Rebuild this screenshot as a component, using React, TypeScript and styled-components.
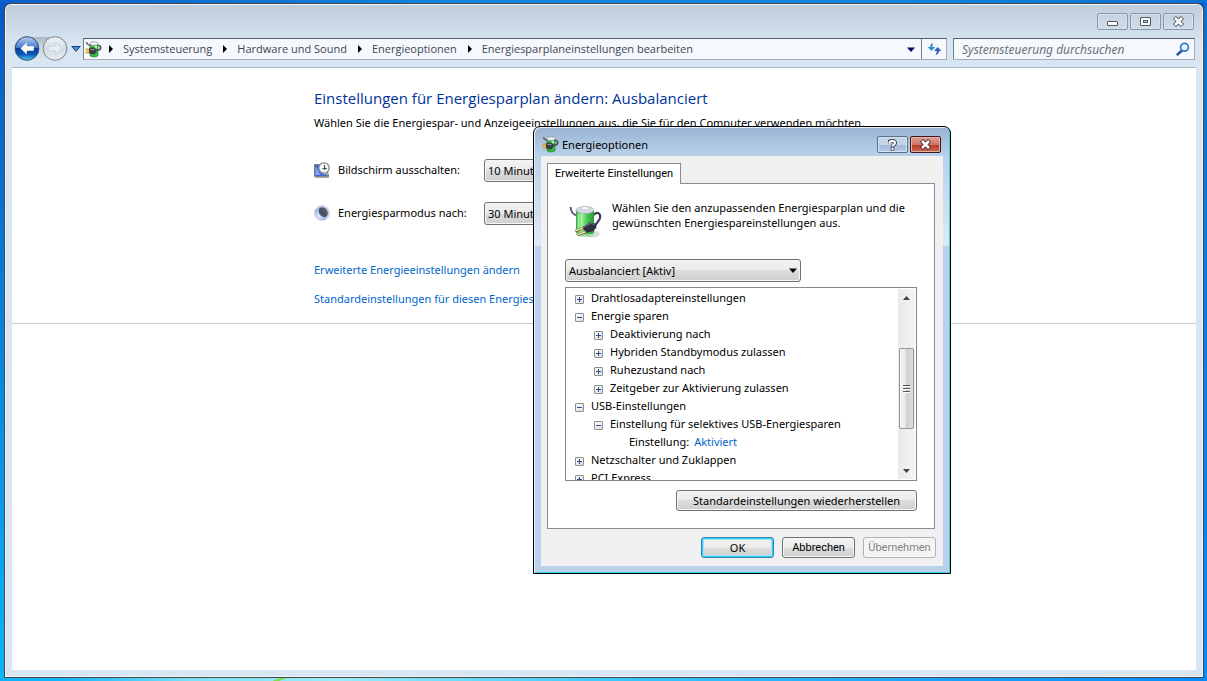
import React from 'react';
import styled, { createGlobalStyle, css } from 'styled-components';

const ui = '"Noto Sans", "Open Sans", sans-serif';
const classic = 'Roboto, Arial, sans-serif';

const GlobalStyle = createGlobalStyle`
  *, *::before, *::after { box-sizing: border-box; }
  body { margin: 0; font: 11px/15px ${ui}; color: #000; }
  button, select, input { font: inherit; color: inherit; margin: 0; }
  svg { display: block; flex: none; }
  ul, ol, h1, h2, p { margin: 0; padding: 0; font-size: inherit; font-weight: normal; list-style: none; }
`;

/* ---------- desktop and main window ---------- */

const Desktop = styled.div`
  position: relative;
  display: flex;
  min-height: 100vh;
  padding: 3px 3px 3px 4px;
  background:
    linear-gradient(160deg, transparent 32%, #86dc50 36%, #86dc50 60%, transparent 66%) 272px 100% / 16px 3px no-repeat,
    linear-gradient(90deg, #0fb2fa 0, #12b6fa 5%, #7ce2f8 16%, #9aecfa 28%, #6edcfa 38%, #38c6fc 52%, #1ea6fc 75%, #068cfa 100%) 0 100% / 100% 3px no-repeat,
    linear-gradient(90deg, #0a5fcb 0, #1287df 40%, #1284dc 75%, #0a70d6 100%) 0 0 / 100% 3px no-repeat,
    linear-gradient(#0a70d6, #0a8cf6) 100% 0 / 3px 100% no-repeat,
    linear-gradient(#0759c8, #0784de 50%, #0cb4f9);
`;

const Window = styled.div`
  flex: 1;
  min-width: 0;
  display: flex;
  flex-direction: column;
  padding: 0 7px 7px;
  border: 1px solid #464646;
  border-radius: 7px 7px 0 0;
  box-shadow: inset 0 0 0 1px #f1f6fb;
  background: linear-gradient(#bfcddb 0, #cbd8e6 20px, #d8e5f2 40px, #d8e5f2 100%);
`;

const TitleBar = styled.div`
  display: flex;
  justify-content: flex-end;
  gap: 2px;
  height: 33px;
  padding: 9px 2px 0 0;
`;

const CaptionButton = styled.button<{ $tone: 'idle' | 'help' | 'close' }>`
  display: flex;
  align-items: center;
  justify-content: center;
  width: 31px;
  height: 17px;
  padding: 0;
  border-radius: 2px;
  ${p => p.$tone === 'idle' && css`
    border: 1px solid #8895ad;
    background: linear-gradient(#c4d1df, #d0dce9);
    box-shadow: inset 0 0 0 1px #d8e2ed;
  `}
  ${p => p.$tone === 'help' && css`
    border: 1px solid #5d6f8c;
    background: linear-gradient(#c5d5e8 50%, #a0b8d6 50%, #b4cce6);
    box-shadow: inset 0 0 0 1px #d5e2f0;
  `}
  ${p => p.$tone === 'close' && css`
    border: 1px solid #431422;
    background: linear-gradient(#e0a096, #cf7567 50%, #b8361f 50%, #cf6a54);
    box-shadow: inset 0 0 0 1px #e3b0a8;
  `}
`;

const NavRow = styled.div`
  display: flex;
  align-items: flex-start;
  height: 30px;
  padding: 0 1px 0 2px;
`;

const TravelButtons = styled.div`
  display: flex;
  gap: 2px;
  height: 24px;
  border-radius: 12px;
  background: linear-gradient(#aab8c8, #c8d4e0 40%, #dde7f1);
`;

const BareButton = styled.button`
  display: flex;
  align-items: center;
  justify-content: center;
  padding: 0;
  border: 0;
  background: none;
`;

const HistoryButton = styled(BareButton)`
  width: 15px;
  height: 24px;
`;

const FieldBox = styled.div`
  display: flex;
  align-items: center;
  height: 22px;
  margin-top: 1px;
  border: 1px solid #a4adb8;
  border-top-color: #56606c;
  border-left-color: #747e8a;
  border-radius: 1px;
  background: #f5f9fd;
`;

const AddressBar = styled(FieldBox)`
  flex: 1;
  min-width: 0;
  padding-left: 1px;
`;

const Crumbs = styled.ol`
  flex: 1;
  display: flex;
  overflow: hidden;
  padding-left: 7px;
`;

const Crumb = styled.li`
  display: flex;
  align-items: center;
  gap: 10px;
  padding-right: 11px;
  white-space: nowrap;
`;

const CrumbLink = styled.a`
  color: #3d4654;
  text-decoration: none;
  font: 11px/18px "Open Sans", ${ui};
`;

const AddressDrop = styled(BareButton)`
  width: 20px;
  height: 20px;
`;

const RefreshButton = styled(BareButton)`
  width: 25px;
  height: 20px;
  border-left: 1px solid #747e8a;
`;

const SearchBox = styled(FieldBox)`
  width: 242px;
  margin-left: 6px;
  padding: 0 4px 0 8px;
`;

const SearchInput = styled.input`
  flex: 1;
  min-width: 0;
  padding: 0;
  border: 0;
  outline: 0;
  background: none;
  font-size: 12px;
  font-style: italic;
  &::placeholder { color: #6b7178; opacity: 1; }
`;

const Content = styled.main`
  flex: 1;
  border-top: 1px solid #a9b7c6;
  background: #fff;
`;

const Settings = styled.section`
  padding: 20px 16px 16px 302px;
  border-bottom: 1px solid #ccc;
`;

const Heading = styled.h1`
  color: #003399;
  font: 15px/20px "Open Sans", ${ui};
`;

const Intro = styled.p`
  margin: 7px 0 28px;
  line-height: 16px;
`;

const SettingRow = styled.div`
  display: flex;
  align-items: flex-start;
  height: 23px;
  margin-bottom: 20px;
  & > svg { margin-top: 3px; }
`;

const SettingLabel = styled.label`
  width: 146px;
  margin-left: 8px;
  line-height: 21px;
`;

const TaskLink = styled.a`
  display: block;
  width: max-content;
  margin-top: 13px;
  color: #0066cc;
  text-decoration: none;
  line-height: 16px;
`;

const Links = styled.nav`
  padding-top: 4px;
`;

/* ---------- drop-down ---------- */

const SelectFrame = styled.span<{ $width: number }>`
  position: relative;
  display: block;
  width: ${p => p.$width}px;
  & > svg { position: absolute; right: 4px; top: 9px; pointer-events: none; }
`;

const SelectControl = styled.select`
  appearance: none;
  display: block;
  width: 100%;
  height: 23px;
  padding: 0 18px 0 3px;
  border: 1px solid #707070;
  border-radius: 3px;
  background: linear-gradient(#f2f2f2, #ebebeb 50%, #dddddd 50%, #cfcfcf);
  box-shadow: inset 0 0 0 1px #f6f6f6;
`;

const Triangle = ({ color = '#000' }: { color?: string }) => (
  <svg width="8" height="5" viewBox="0 0 8 5"><path d="M0 0.500h8L4 5z" fill={color} /></svg>
);

function Select({ id, width, value, label }: { id: string; width: number; value: string; label?: string }) {
  return (
    <SelectFrame $width={width}>
      <SelectControl id={id} aria-label={label} defaultValue={value}>
        <option>{value}</option>
      </SelectControl>
      <Triangle />
    </SelectFrame>
  );
}

/* ---------- dialog ---------- */

const Dialog = styled.div`
  position: absolute;
  left: 533px;
  top: 126px;
  width: 418px;
  padding: 0 7px 7px;
  border: 1px solid #000;
  border-radius: 7px 7px 0 0;
  background: linear-gradient(#98b2d0 0, #a9c2de 14px, #b9d1ea 30px, #dfe9f6 119px, #b9d1ea 119px);
  box-shadow: inset 1px 1px 0 #e6f0fa, inset -1px -1px 0 #35d0ea;
`;

const DialogTitle = styled.header`
  display: flex;
  gap: 2px;
  height: 29px;
  padding: 9px 2px 0 1px;
`;

const DialogName = styled.h2`
  flex: 1;
  margin-left: 1px;
  line-height: 17px;
`;

const DialogBody = styled.div`
  padding: 7px 7px 8px 6px;
  background: #f0f0f0;
`;

const Tab = styled.button`
  position: relative;
  display: block;
  height: 21px;
  margin-bottom: -1px;
  padding: 0 7px;
  border: 1px solid #898c95;
  border-bottom: 0;
  background: #fff;
  font: 11px/18px ${classic};
`;

const Panel = styled.div`
  margin-right: 1px;
  padding: 16px 17px 17px;
  border: 1px solid #898c95;
  background: #fff;
`;

const Lead = styled.div`
  display: flex;
  gap: 9px;
  margin-bottom: 20px;
  padding-left: 4px;
  & > svg { margin-top: 5px; }
`;

const Tree = styled.div`
  display: flex;
  height: 194px;
  margin: 5px 0 9px;
  border: 1px solid #828790;
  overflow: hidden;
`;

const TreeList = styled.ul`
  flex: 1;
  height: 100%;
  padding: 1px 0 0 9px;
  overflow: hidden;
`;

const TreeRow = styled.li<{ $depth: number; $leaf: boolean }>`
  display: flex;
  align-items: center;
  gap: ${p => (p.$leaf ? 5 : 7)}px;
  height: 18px;
  padding-left: ${p => p.$depth * 19 + (p.$leaf ? 16 : 0)}px;
  line-height: 18px;
`;

const Expander = styled.button`
  flex: none;
  width: 9px;
  height: 9px;
  margin-top: 3px;
  padding: 0;
  border: 1px solid #8e8f8f;
  border-radius: 1px;
  background: linear-gradient(135deg, #fff, #dcdcdc);
`;

const ValueLink = styled.a`
  color: #0066cc;
  text-decoration: none;
`;

const ScrollBar = styled.div`
  display: flex;
  flex-direction: column;
  align-items: center;
  width: 17px;
  margin: 1px 1px 1px 0;
  background: linear-gradient(90deg, #e9e9e9, #f3f3f3);
`;

const ScrollButton = styled(BareButton)`
  width: 17px;
  height: 17px;
`;

const ScrollTrack = styled.div`
  flex: 1;
  padding: 42px 1px 0;
`;

const Thumb = styled.div`
  display: flex;
  align-items: center;
  justify-content: center;
  width: 15px;
  height: 81px;
  border: 1px solid #979797;
  border-radius: 2px;
  background: linear-gradient(90deg, #f5f5f5, #e6e6e6 45%, #cfcfcf 50%, #dcdcdc);
`;

const PushButton = styled.button<{ $width: number; $kind?: 'default' | 'disabled'; $classic?: boolean }>`
  width: ${p => p.$width}px;
  height: 21px;
  padding: 0;
  border: 1px solid #707070;
  border-radius: 3px;
  background: linear-gradient(#f2f2f2, #ebebeb 50%, #dddddd 50%, #cfcfcf);
  box-shadow: inset 0 0 0 1px #f8f8f8;
  ${p => p.$classic && css`font-family: ${classic};`}
  ${p => p.$kind === 'default' && css`
    border-color: #3c7fb1;
    box-shadow: inset 0 0 0 1px #2fd0f8, inset 0 0 0 2px #9ce6f8;
  `}
  ${p => p.$kind === 'disabled' && css`
    border-color: #adb2b5;
    background: #f4f4f4;
    color: #838383;
  `}
`;

const RestoreRow = styled.div`
  display: flex;
  justify-content: flex-end;
`;

const DialogActions = styled.div`
  display: flex;
  justify-content: flex-end;
  gap: 8px;
  margin-top: 8px;
`;

/* ---------- icons ---------- */

function BatteryIcon() {
  return (
    <svg width="34" height="34" viewBox="0 0 34 34">
      <defs>
        <linearGradient id="cell" x1="0" x2="1">
          <stop offset="0" stopColor="#35a83e" /><stop offset=".3" stopColor="#a2f4a2" />
          <stop offset=".6" stopColor="#4ccc56" /><stop offset="1" stopColor="#2b9438" />
        </linearGradient>
      </defs>
      <ellipse cx="23" cy="29" rx="8" ry="3.5" fill="#000" opacity=".14" />
      <path d="M1.500 2c.5 5 2.500 7.500 6 8.500" fill="none" stroke="#4a5062" strokeWidth="1.800" />
      <path d="M24.500 10c4-4.500 7.500-1 6.500 3-1 4-5 5-5.500 10" fill="none" stroke="#383c54" strokeWidth="2.200" />
      <path d="M7 5v24c2 4 16 4 18 0V5z" fill="url(#cell)" />
      <path d="M7 27.500v1.500c2 4 16 4 18 0v-1.500c-3 3-15 3-18 0z" fill="#b4dcb7" />
      <ellipse cx="16" cy="5" rx="9" ry="3.500" fill="#d6dce1" stroke="#a5afb6" strokeWidth=".7" />
      <ellipse cx="16" cy="3.200" rx="4" ry="1.800" fill="#f7f9fa" stroke="#a9b8c4" strokeWidth=".6" />
      <path d="M9.500 9v17" stroke="#d5ffd5" strokeWidth="1.500" opacity=".6" />
      <path d="M13 22.500l8-5 5.500 1 1 4-3 3.500-7 2z" fill="#2e3040" />
      <path d="M14 22.500l7.500-4 4 1" fill="none" stroke="#777c92" strokeWidth="1" />
      <path d="M14 23.500l-8 2.500M16.500 27l-8 3" stroke="#6b5422" strokeWidth="2.800" />
      <path d="M14 23.200l-8 2.500M16.500 26.700l-8 3" stroke="#f3dfa8" strokeWidth="1.500" />
    </svg>
  );
}

function PowerIcon() {
  return (
    <svg width="17" height="17" viewBox="0 0 17 17">
      <path d="M1.500 1c.2 2 1.500 2.800 3.500 3.500" fill="none" stroke="#5a6068" strokeWidth="1.400" />
      <path d="M5 3h8v11.500c-1 2-7 2-8 0z" fill="#38b944" stroke="#1c7a28" strokeWidth=".6" />
      <path d="M9.500 4.500h2.500v3h-2.500z" fill="#a8f8a8" />
      <ellipse cx="9" cy="2.600" rx="4.200" ry="1.900" fill="#eef2f5" stroke="#8f98a0" strokeWidth=".8" />
      <path d="M13 4.500c4-.5 3 4.500.5 4.500-1.500.200-2 .5-3 .5" fill="none" stroke="#4a4f56" strokeWidth="1.600" />
      <path d="M.5 8.500h4M.5 11.500h4" stroke="#e0a81a" strokeWidth="1.800" />
      <path d="M4 7.500l2-1h3.500l2 2v2.500l-2 2.200H6l-2-1.200z" fill="#3a3e44" />
      <path d="M5.500 8.500h4" stroke="#8b9198" strokeWidth="1.200" />
    </svg>
  );
}

function BackIcon() {
  return (
    <svg width="26" height="26" viewBox="0 0 26 26">
      <defs>
        <linearGradient id="orb" x1="0" x2="0" y1="0" y2="1">
          <stop offset="0" stopColor="#b4cdf0" /><stop offset=".45" stopColor="#4a7ecf" />
          <stop offset=".5" stopColor="#0b3f9c" /><stop offset=".75" stopColor="#0d56b8" /><stop offset="1" stopColor="#4ad4f8" />
        </linearGradient>
      </defs>
      <circle cx="13" cy="12.500" r="11.800" fill="url(#orb)" stroke="#2c4a78" strokeWidth="1" />
      <path d="M12.800 6.500l-6.300 6 6.300 6v-3.700h7V10.200h-7z" fill="#fff" />
    </svg>
  );
}

function ForwardIcon() {
  return (
    <svg width="26" height="26" viewBox="0 0 26 26">
      <defs>
        <linearGradient id="glass" x1="0" x2="0" y1="0" y2="1">
          <stop offset="0" stopColor="#eef3f7" /><stop offset=".5" stopColor="#d5dde6" /><stop offset="1" stopColor="#e6edf4" />
        </linearGradient>
      </defs>
      <circle cx="13" cy="12.500" r="11.800" fill="url(#glass)" stroke="#7c8794" strokeWidth="1" />
      <path d="M13.200 6.500l6.300 6-6.300 6v-3.700h-7V10.200h7z" fill="#e9eef3" stroke="#c3ccd6" strokeWidth=".8" />
    </svg>
  );
}

function ScreenClockIcon() {
  return (
    <svg width="16" height="16" viewBox="0 0 16 16">
      <path d="M.5 2.500h9v10h5v2H.5z" fill="#3f64dc" stroke="#7a828c" />
      <path d="M1.500 4l5 9h-5z" fill="#86a8f6" />
      <path d="M1 15.300h14" stroke="#9aa2a9" strokeWidth="1.200" />
      <path d="M13.500 9v6" stroke="#8f979e" strokeWidth="1.500" />
      <circle cx="10" cy="6" r="5.200" fill="#f4f6f8" stroke="#858d94" strokeWidth="1.300" />
      <path d="M10.500 3v5M8.500 6.500H13" fill="none" stroke="#3c5068" strokeWidth="1.100" />
    </svg>
  );
}

function MoonIcon() {
  return (
    <svg width="16" height="16" viewBox="0 0 16 16">
      <defs>
        <radialGradient id="moon" cx=".3" cy=".7" r=".8">
          <stop offset="0" stopColor="#e4ecf8" /><stop offset=".5" stopColor="#9db9ee" /><stop offset="1" stopColor="#dfe5ee" />
        </radialGradient>
      </defs>
      <circle cx="8" cy="8" r="7.400" fill="url(#moon)" stroke="#c3c9d0" strokeWidth=".8" />
      <path d="M5.500 3c3.500-2.500 8.500 1 8.300 5.500-.3 3-2.800 4-4.300 3.500C6 11 3.500 7 5.500 3z" fill="#4a5468" />
      <path d="M8.500 3.500c3-.5 5 2 4.300 4.500-2 .5-4.500-2-4.300-4.500z" fill="#5b5e62" />
    </svg>
  );
}

const MinimizeIcon = () => (
  <svg width="11" height="11" viewBox="0 0 11 11"><rect x=".5" y="5.500" width="10" height="4" rx=".5" fill="#fff" stroke="#535666" /></svg>
);
const MaximizeIcon = () => (
  <svg width="11" height="9" viewBox="0 0 11 9"><rect x=".5" y=".5" width="10" height="8" rx=".5" fill="#fff" stroke="#535666" /><rect x="3.500" y="3.500" width="4" height="2" fill="#c8d4e2" stroke="#535666" /></svg>
);
const CloseIcon = ({ line = '#535666' }: { line?: string }) => (
  <svg width="13" height="11" viewBox="0 0 13 11">
    <path d="M2.500 1.500l8 8M10.500 1.500l-8 8" stroke={line} strokeWidth="4.400" />
    <path d="M3 2l7 7M10 2l-7 7" stroke="#fff" strokeWidth="2.600" />
  </svg>
);
const HelpIcon = () => (
  <svg width="9" height="12" viewBox="0 0 9 12">
    <g fill="none" stroke="#4c5568" strokeWidth="3.800"><path d="M1 4.200C1 1 7.500 1 7.200 4c0 1.800-2.700 1.600-2.700 3.800" /><path d="M4.500 8.300v3.400" /></g>
    <g fill="none" stroke="#fff" strokeWidth="2"><path d="M1.500 4.200C1.300 1.200 7.300 1.200 7 4c0 1.800-2.500 1.600-2.500 3.300" /><path d="M4.500 9v1.800" /></g>
  </svg>
);
const CrumbArrow = () => (
  <svg width="4" height="8" viewBox="0 0 4 8"><path d="M0 0l4 4-4 4z" fill="#000" /></svg>
);
const HistoryArrow = () => (
  <svg width="10" height="6" viewBox="0 0 10 6"><path d="M.8.5h8.400L5 5.300z" fill="#2f9bdc" stroke="#1c3f7c" /></svg>
);
const RefreshIcon = () => (
  <svg width="15" height="14" viewBox="0 0 15 14">
    <path d="M6 1C4 1.500 3.200 3 3.200 5H.8l3.700 4L8.200 5H5.500c0-1.800.2-2.800.5-4z" fill="#2f8fd6" />
    <path d="M8.500 13c2.500-.5 3.500-2 3.500-4h2.400l-3.700-4L7 9h2.700c0 1.800-.3 2.800-1.200 4z" fill="#2a62b4" />
  </svg>
);
const SearchIcon = () => (
  <svg width="14" height="14" viewBox="0 0 14 14">
    <path d="M6 8.500l-4.500 4" stroke="#2a4fa0" strokeWidth="2.400" strokeLinecap="round" />
    <circle cx="8.500" cy="5.300" r="3.900" fill="#eef6fd" stroke="#2f7cc8" strokeWidth="1.700" />
  </svg>
);
const ScrollArrow = ({ up }: { up?: boolean }) => (
  <svg width="7" height="4" viewBox="0 0 7 4"><path d={up ? 'M0 4L3.500 0 7 4z' : 'M0 0h7L3.500 4z'} fill="#404448" /></svg>
);
const Grip = () => (
  <svg width="7" height="8" viewBox="0 0 7 8"><path d="M0 .5h7M0 3.500h7M0 6.500h7" stroke="#55585c" /><path d="M0 1.500h7M0 4.500h7M0 7.500h7" stroke="#fff" /></svg>
);
const Sign = ({ open }: { open: boolean }) => (
  <svg width="7" height="7" viewBox="0 0 7 7"><path d={open ? 'M1 3.500h5' : 'M1 3.500h5M3.500 1v5'} stroke="#2b4a94" /></svg>
);

/* ---------- data ---------- */

const crumbs = ['Systemsteuerung', 'Hardware und Sound', 'Energieoptionen', 'Energiesparplaneinstellungen bearbeiten'];

const options: { text: string; depth: number; open?: boolean; value?: string }[] = [
  { text: 'Drahtlosadaptereinstellungen', depth: 0, open: false },
  { text: 'Energie sparen', depth: 0, open: true },
  { text: 'Deaktivierung nach', depth: 1, open: false },
  { text: 'Hybriden Standbymodus zulassen', depth: 1, open: false },
  { text: 'Ruhezustand nach', depth: 1, open: false },
  { text: 'Zeitgeber zur Aktivierung zulassen', depth: 1, open: false },
  { text: 'USB-Einstellungen', depth: 0, open: true },
  { text: 'Einstellung für selektives USB-Energiesparen', depth: 1, open: true },
  { text: 'Einstellung:', depth: 2, value: 'Aktiviert' },
  { text: 'Netzschalter und Zuklappen', depth: 0, open: false },
  { text: 'PCI Express', depth: 0, open: false },
];

export default function App() {
  return (
    <Desktop>
      <GlobalStyle />
      <Window>
        <TitleBar>
          <CaptionButton $tone="idle" aria-label="Minimieren"><MinimizeIcon /></CaptionButton>
          <CaptionButton $tone="idle" aria-label="Maximieren"><MaximizeIcon /></CaptionButton>
          <CaptionButton $tone="idle" aria-label="Schließen"><CloseIcon /></CaptionButton>
        </TitleBar>
        <NavRow>
          <TravelButtons>
            <BareButton aria-label="Zurück"><BackIcon /></BareButton>
            <BareButton aria-label="Vorwärts"><ForwardIcon /></BareButton>
          </TravelButtons>
          <HistoryButton aria-label="Verlauf"><HistoryArrow /></HistoryButton>
          <AddressBar>
            <PowerIcon />
            <Crumbs>
              {crumbs.map(c => (
                <Crumb key={c}><CrumbArrow /><CrumbLink href="#">{c}</CrumbLink></Crumb>
              ))}
            </Crumbs>
            <AddressDrop aria-label="Vorherige Orte"><Triangle color="#00005a" /></AddressDrop>
            <RefreshButton aria-label="Aktualisieren"><RefreshIcon /></RefreshButton>
          </AddressBar>
          <SearchBox>
            <SearchInput aria-label="Suche" placeholder="Systemsteuerung durchsuchen" />
            <SearchIcon />
          </SearchBox>
        </NavRow>
        <Content>
          <Settings>
            <Heading>Einstellungen für Energiesparplan ändern: Ausbalanciert</Heading>
            <Intro>Wählen Sie die Energiespar- und Anzeigeeinstellungen aus, die Sie für den Computer verwenden möchten.</Intro>
            <SettingRow>
              <ScreenClockIcon />
              <SettingLabel htmlFor="screen">Bildschirm ausschalten:</SettingLabel>
              <Select id="screen" width={140} value="10 Minuten" />
            </SettingRow>
            <SettingRow>
              <MoonIcon />
              <SettingLabel htmlFor="sleep">Energiesparmodus nach:</SettingLabel>
              <Select id="sleep" width={140} value="30 Minuten" />
            </SettingRow>
            <Links>
              <TaskLink href="#">Erweiterte Energieeinstellungen ändern</TaskLink>
              <TaskLink href="#">Standardeinstellungen für diesen Energiesparplan wiederherstellen</TaskLink>
            </Links>
          </Settings>
        </Content>
      </Window>

      <Dialog role="dialog" aria-labelledby="dialog-name">
        <DialogTitle>
          <PowerIcon />
          <DialogName id="dialog-name">Energieoptionen</DialogName>
          <CaptionButton $tone="help" aria-label="Hilfe"><HelpIcon /></CaptionButton>
          <CaptionButton $tone="close" aria-label="Schließen"><CloseIcon line="#4a2630" /></CaptionButton>
        </DialogTitle>
        <DialogBody>
          <Tab role="tab" aria-selected="true">Erweiterte Einstellungen</Tab>
          <Panel role="tabpanel">
            <Lead>
              <BatteryIcon />
              <p>Wählen Sie den anzupassenden Energiesparplan und die gewünschten Energiespareinstellungen aus.</p>
            </Lead>
            <Select id="plan" width={236} value="Ausbalanciert [Aktiv]" label="Energiesparplan" />
            <Tree>
              <TreeList>
                {options.map(o => (
                  <TreeRow key={o.text} $depth={o.depth} $leaf={o.open === undefined}>
                    {o.open !== undefined && (
                      <Expander aria-label={o.open ? 'Reduzieren' : 'Erweitern'}><Sign open={o.open} /></Expander>
                    )}
                    <span>{o.text}</span>
                    {o.value && <ValueLink href="#">{o.value}</ValueLink>}
                  </TreeRow>
                ))}
              </TreeList>
              <ScrollBar>
                <ScrollButton aria-label="Nach oben"><ScrollArrow up /></ScrollButton>
                <ScrollTrack><Thumb><Grip /></Thumb></ScrollTrack>
                <ScrollButton aria-label="Nach unten"><ScrollArrow /></ScrollButton>
              </ScrollBar>
            </Tree>
            <RestoreRow>
              <PushButton $width={241}>Standardeinstellungen wiederherstellen</PushButton>
            </RestoreRow>
          </Panel>
          <DialogActions>
            <PushButton $width={73} $kind="default">OK</PushButton>
            <PushButton $width={73} $classic>Abbrechen</PushButton>
            <PushButton $width={73} $classic $kind="disabled" disabled>Übernehmen</PushButton>
          </DialogActions>
        </DialogBody>
      </Dialog>
    </Desktop>
  );
}
